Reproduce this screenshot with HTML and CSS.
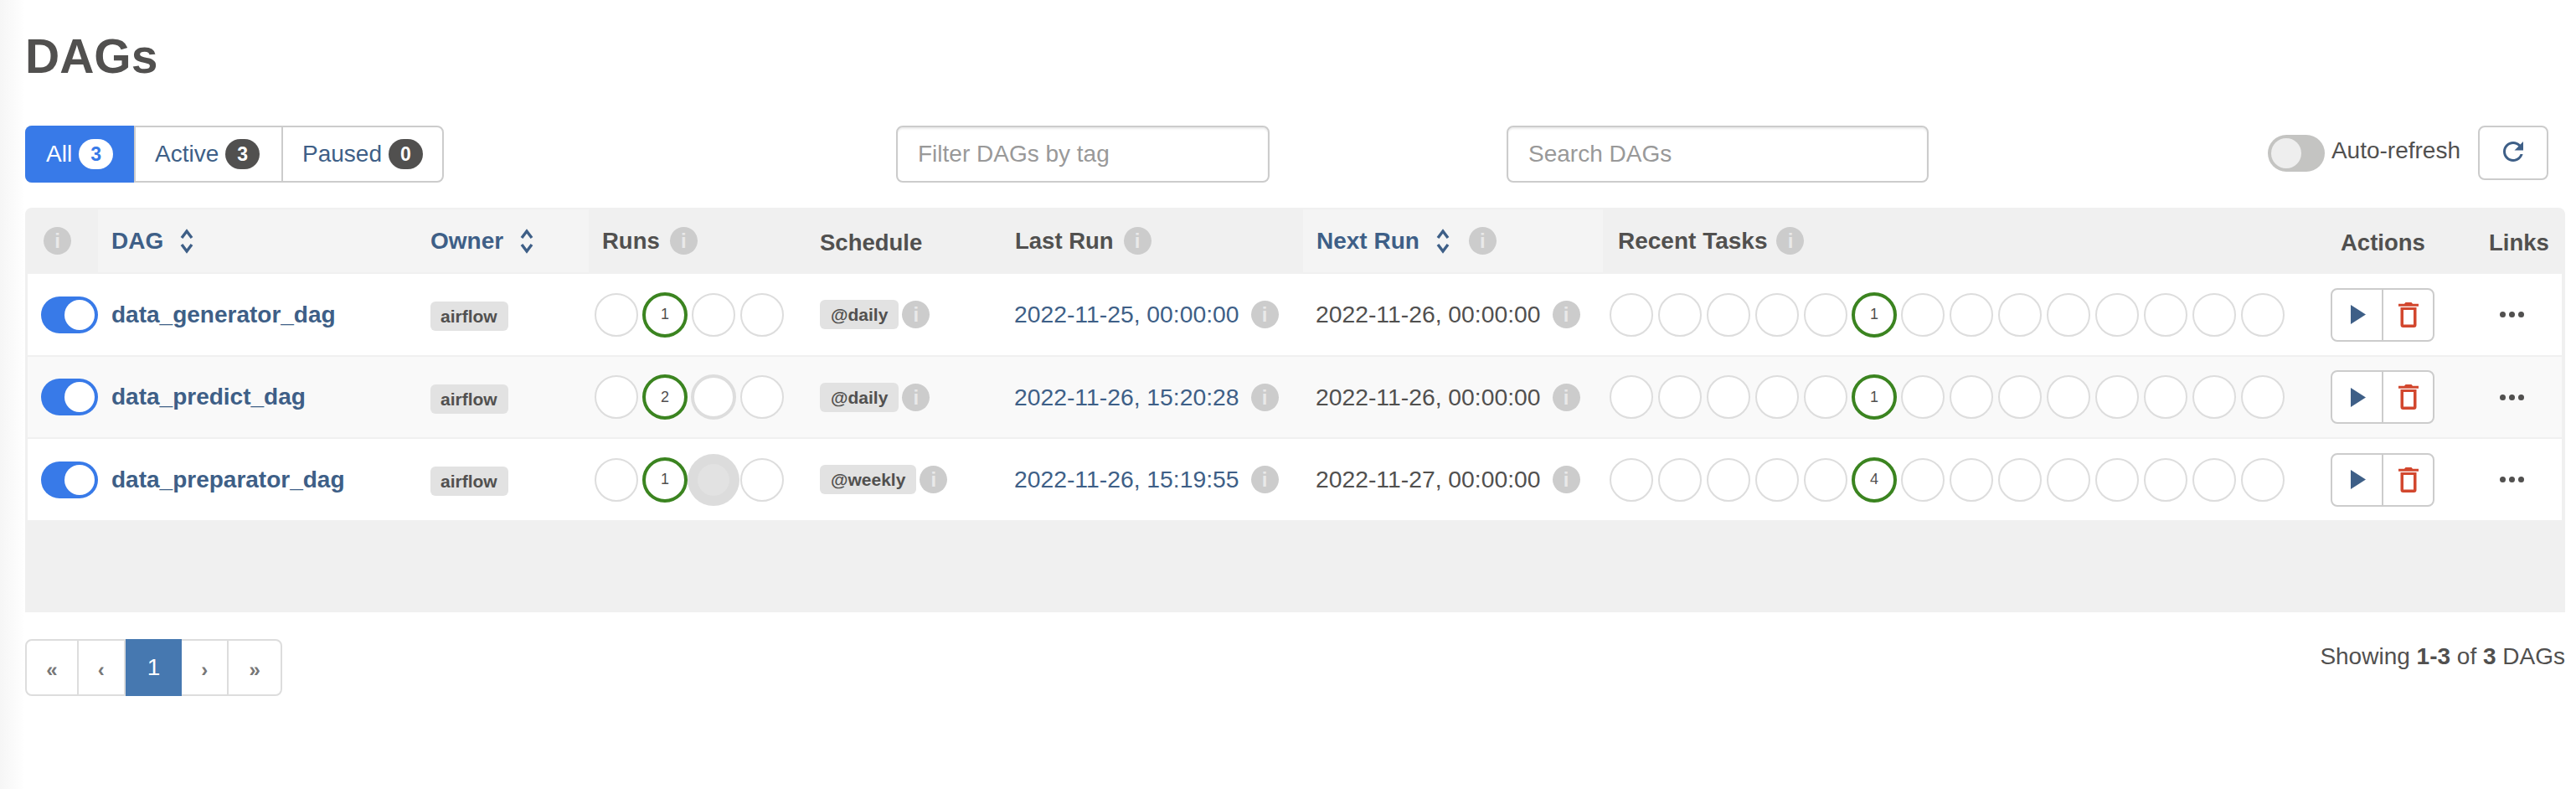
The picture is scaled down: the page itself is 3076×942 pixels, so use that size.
FILE: index.html
```html
<!DOCTYPE html>
<html lang="en">
<head>
<meta charset="utf-8">
<title>DAGs</title>
<link rel="stylesheet" href="styles.css">
</head>
<body>
<main class="page">
  <h1 class="title">DAGs</h1>
  <div class="toolbar">
    <div class="seg">
      <a class="seg-btn seg-on">All <span class="count count-on">3</span></a>
      <a class="seg-btn">Active <span class="count">3</span></a>
      <a class="seg-btn">Paused <span class="count">0</span></a>
    </div>
    <input class="field field-tag" placeholder="Filter DAGs by tag">
    <input class="field field-search" placeholder="Search DAGs">
    <div class="refresh">
      <span class="switch"></span>
      <span class="refresh-label">Auto-refresh</span>
      <button class="refresh-btn"><svg class="refresh-icon" viewBox="0 0 24 24"><path d="M17.65 6.35C16.2 4.9 14.21 4 12 4c-4.42 0-7.99 3.58-7.99 8s3.57 8 7.99 8c3.73 0 6.84-2.55 7.73-6h-2.08c-.82 2.33-3.04 4-5.65 4-3.31 0-6-2.69-6-6s2.69-6 6-6c1.66 0 3.14.69 4.22 1.78L13 11h7V4l-2.35 2.35z"/></svg></button>
    </div>
  </div>

  <div class="table-wrap">
    <table class="dags">
      <colgroup>
        <col class="c-toggle"><col class="c-dag"><col class="c-owner"><col class="c-runs"><col class="c-sched"><col class="c-last"><col class="c-next"><col class="c-tasks"><col class="c-actions"><col class="c-links">
      </colgroup>
      <thead>
        <tr>
          <th><span class="info info-first">i</span></th>
          <th class="sorted"><span class="head head-link">DAG <svg class="sort" viewBox="0 0 16 30"><path d="M2 11L8 3l6 8M2 19l6 8 6-8"/></svg></span></th>
          <th class="sorted"><span class="head head-link">Owner <svg class="sort" viewBox="0 0 16 30"><path d="M2 11L8 3l6 8M2 19l6 8 6-8"/></svg></span></th>
          <th><span class="head">Runs <span class="info">i</span></span></th>
          <th class="plain">Schedule</th>
          <th><span class="head">Last Run <span class="info">i</span></span></th>
          <th class="sorted"><span class="head head-link">Next Run <svg class="sort" viewBox="0 0 16 30"><path d="M2 11L8 3l6 8M2 19l6 8 6-8"/></svg> <span class="info info-far">i</span></span></th>
          <th class="sorted-off"><span class="head head-wide">Recent Tasks <span class="info">i</span></span></th>
          <th class="plain">Actions</th>
          <th class="plain">Links</th>
        </tr>
      </thead>
      <tbody id="rows">
        <tr class="row-a">
          <td><span class="toggle"></span></td>
          <td><a class="dag-name">data_generator_dag</a></td>
          <td><span class="tag tag-owner">airflow</span></td>
          <td class="dots-cell"><div class="dots"><i class="dot"></i><i class="dot dot-ok">1</i><i class="dot"></i><i class="dot"></i></div></td>
          <td><div class="sched"><span class="tag">@daily</span><span class="info">i</span></div></td>
          <td class="cell-last"><div class="when"><a class="date">2022-11-25, 00:00:00</a><span class="info">i</span></div></td>
          <td class="cell-next"><div class="when"><span class="date-plain">2022-11-26, 00:00:00</span><span class="info">i</span></div></td>
          <td class="dots-cell"><div class="dots"><i class="dot"></i><i class="dot"></i><i class="dot"></i><i class="dot"></i><i class="dot"></i><i class="dot dot-ok">1</i><i class="dot"></i><i class="dot"></i><i class="dot"></i><i class="dot"></i><i class="dot"></i><i class="dot"></i><i class="dot"></i><i class="dot"></i></div></td>
          <td class="act-cell"><div class="acts"><button class="act"><svg class="play" viewBox="0 0 18 23"><path d="M0 0l18 11.5L0 23z"/></svg></button><button class="act"><svg class="trash" viewBox="0 0 24 30"><path d="M8.5 0h7l1.5 1.7h7v3.1H0V1.700h7zM2.500 6h19v21a3 3 0 0 1-3 3h-13a3 3 0 0 1-3-3zM6 9v17.500h12V9z" fill-rule="evenodd"/></svg></button></div></td>
          <td class="more-cell"><span class="more"><i></i><i></i><i></i></span></td>
        </tr>
        <tr class="row-b">
          <td><span class="toggle"></span></td>
          <td><a class="dag-name">data_predict_dag</a></td>
          <td><span class="tag tag-owner">airflow</span></td>
          <td class="dots-cell"><div class="dots"><i class="dot"></i><i class="dot dot-ok">2</i><i class="dot dot-thick"></i><i class="dot"></i></div></td>
          <td><div class="sched"><span class="tag">@daily</span><span class="info">i</span></div></td>
          <td class="cell-last"><div class="when"><a class="date">2022-11-26, 15:20:28</a><span class="info">i</span></div></td>
          <td class="cell-next"><div class="when"><span class="date-plain">2022-11-26, 00:00:00</span><span class="info">i</span></div></td>
          <td class="dots-cell"><div class="dots"><i class="dot"></i><i class="dot"></i><i class="dot"></i><i class="dot"></i><i class="dot"></i><i class="dot dot-ok">1</i><i class="dot"></i><i class="dot"></i><i class="dot"></i><i class="dot"></i><i class="dot"></i><i class="dot"></i><i class="dot"></i><i class="dot"></i></div></td>
          <td class="act-cell"><div class="acts"><button class="act"><svg class="play" viewBox="0 0 18 23"><path d="M0 0l18 11.5L0 23z"/></svg></button><button class="act"><svg class="trash" viewBox="0 0 24 30"><path d="M8.5 0h7l1.5 1.7h7v3.1H0V1.700h7zM2.500 6h19v21a3 3 0 0 1-3 3h-13a3 3 0 0 1-3-3zM6 9v17.500h12V9z" fill-rule="evenodd"/></svg></button></div></td>
          <td class="more-cell"><span class="more"><i></i><i></i><i></i></span></td>
        </tr>
        <tr class="row-c">
          <td><span class="toggle"></span></td>
          <td><a class="dag-name">data_preparator_dag</a></td>
          <td><span class="tag tag-owner">airflow</span></td>
          <td class="dots-cell"><div class="dots"><i class="dot"></i><i class="dot dot-ok">1</i><i class="dot dot-pulse"></i><i class="dot"></i></div></td>
          <td><div class="sched"><span class="tag">@weekly</span><span class="info">i</span></div></td>
          <td class="cell-last"><div class="when"><a class="date">2022-11-26, 15:19:55</a><span class="info">i</span></div></td>
          <td class="cell-next"><div class="when"><span class="date-plain">2022-11-27, 00:00:00</span><span class="info">i</span></div></td>
          <td class="dots-cell"><div class="dots"><i class="dot"></i><i class="dot"></i><i class="dot"></i><i class="dot"></i><i class="dot"></i><i class="dot dot-ok">4</i><i class="dot"></i><i class="dot"></i><i class="dot"></i><i class="dot"></i><i class="dot"></i><i class="dot"></i><i class="dot"></i><i class="dot"></i></div></td>
          <td class="act-cell"><div class="acts"><button class="act"><svg class="play" viewBox="0 0 18 23"><path d="M0 0l18 11.5L0 23z"/></svg></button><button class="act"><svg class="trash" viewBox="0 0 24 30"><path d="M8.5 0h7l1.5 1.7h7v3.1H0V1.700h7zM2.500 6h19v21a3 3 0 0 1-3 3h-13a3 3 0 0 1-3-3zM6 9v17.500h12V9z" fill-rule="evenodd"/></svg></button></div></td>
          <td class="more-cell"><span class="more"><i></i><i></i><i></i></span></td>
        </tr>
      </tbody>
    </table>
  </div>

  <div class="foot">
    <nav class="pager">
      <a class="pg pg-1">«</a>
      <a class="pg pg-2">‹</a>
      <a class="pg pg-on">1</a>
      <a class="pg pg-2">›</a>
      <a class="pg pg-1">»</a>
    </nav>
    <p class="showing">Showing <b>1-3</b> of <b>3</b> DAGs</p>
  </div>
</main>
</body>
</html>
```

FILE: styles.css
```css
* { box-sizing: border-box; }
html, body { margin: 0; height: 100%; }
body {
  background: linear-gradient(to right, #f6f6f6 0, #fdfdfd 24px, #fff 30px);
  color: #51504f;
  font-family: "Liberation Sans", Arial, sans-serif;
  font-size: 28px;
}
.page { padding: 0 13px 0 30px; }
.title {
  margin: 0;
  height: 150px;
  padding-top: 35px;
  font-size: 57px;
  line-height: 64px;
  font-weight: 700;
  color: #51504f;
}

/* toolbar */
.toolbar { display: flex; align-items: flex-start; height: 68px; }
.seg {
  display: flex;
  width: 500px;
  height: 68px;
  border: 2px solid #ccc;
  border-radius: 8px;
  background: #fff;
}
.seg-btn {
  display: flex;
  align-items: center;
  gap: 8px;
  padding: 0 23px;
  color: #3e5f87;
  border-left: 2px solid #ccc;
  white-space: nowrap;
  flex: 0 0 auto;
}
.seg-btn:nth-child(2) { width: 176px; }
.seg-btn:nth-child(3) { width: 194px; }
.seg-on {
  margin: -2px 0 -2px -2px;
  width: 130px;
  background: #387ae8;
  color: #fff;
  border-left: 0;
  border-radius: 8px 0 0 8px;
  padding-left: 25px;
  padding-right: 0;
}
.count {
  display: inline-block;
  min-width: 41px;
  height: 36px;
  border-radius: 18px;
  background: #51504f;
  color: #fff;
  font-size: 23px;
  font-weight: 700;
  line-height: 36px;
  text-align: center;
}
.count-on { background: #fff; color: #387ae8; }
.field {
  height: 68px;
  padding: 0 24px;
  border: 2px solid #ccc;
  border-radius: 8px;
  box-shadow: inset 0 2px 2px rgba(0,0,0,.075);
  font: 28px "Liberation Sans", Arial, sans-serif;
  color: #51504f;
  background: #fff;
  outline: 0;
}
.field::placeholder { color: #999; opacity: 1; }
.field-tag { width: 446px; margin-left: 540px; }
.field-search { width: 504px; margin-left: 283px; }
.refresh { display: flex; align-items: flex-start; margin-left: auto; margin-right: 20px; }
.switch {
  width: 68px;
  height: 44px;
  margin-top: 11px;
  border-radius: 22px;
  background: #c4c4c2;
  position: relative;
}
.switch::after {
  content: "";
  position: absolute;
  left: 4px;
  top: 4px;
  width: 36px;
  height: 36px;
  border-radius: 50%;
  background: #eee;
}
.refresh-label { margin: 12px 21px 0 8px; line-height: 36px; }
.refresh-btn {
  display: flex;
  align-items: center;
  justify-content: center;
  width: 84px;
  height: 65px;
  padding: 0 0 3px;
  border: 2px solid #ccc;
  border-radius: 8px;
  background: #fff;
}
.refresh-icon { width: 36px; height: 36px; fill: #3e5f87; }

/* table */
.table-wrap {
  margin-top: 30px;
  height: 483px;
  width: 3033px;
  padding: 0 4px 0 3px;
  background: #f0f0f0;
  border-radius: 8px 8px 0 0;
}
.dags {
  width: 3026px;
  table-layout: fixed;
  border-collapse: separate;
  border-spacing: 0;
}
.c-toggle { width: 84px; }
.c-dag { width: 381px; }
.c-owner { width: 205px; }
.c-runs { width: 260px; }
.c-sched { width: 233px; }
.c-last { width: 360px; }
.c-next { width: 358px; }
.c-tasks { width: 865px; }
.c-actions { width: 177px; }
.c-links { width: 103px; }
th {
  height: 79px;
  padding: 0 0 0 16px;
  text-align: left;
  font-size: 27.5px;
  font-weight: 700;
  color: #51504f;
  white-space: nowrap;
  border-top: 2px solid transparent;
  border-bottom: 2px solid transparent;
  background-clip: padding-box;
}
th.sorted { background-color: #f4f4f4; }
th.plain { padding-top: 5px; }
th.sorted-off { padding-left: 18px; }
.head { display: flex; align-items: center; gap: 12px; }
.head-link { color: #3e5f87; gap: 0; font-size: 28px; }
.head-wide { font-size: 28px; gap: 11px; }
.sort { width: 16px; height: 30px; margin-left: 20px; fill: none; stroke: #3e5f87; stroke-width: 3.4; }
.info {
  display: inline-block;
  flex: none;
  width: 33px;
  height: 33px;
  border-radius: 50%;
  background: #ccc;
  color: #e9e9e9;
  font-size: 24px;
  font-weight: 700;
  line-height: 33px;
  text-align: center;
}
.info-first { margin-left: 3px; }
.info-far { margin-left: 23px; }

td {
  height: 99px;
  padding: 0 0 0 16px;
  background: #fff;
  border-bottom: 2px solid #f0f0f0;
  vertical-align: middle;
  white-space: nowrap;
}
.row-b td { background: #f9f9f9; height: 98px; }
.row-c td { height: 97px; border-bottom: 0; }
.toggle {
  display: block;
  position: relative;
  width: 68px;
  height: 44px;
  border-radius: 22px;
  background: #387ae8;
}
.toggle::after {
  content: "";
  position: absolute;
  right: 4px;
  top: 4px;
  width: 36px;
  height: 36px;
  border-radius: 50%;
  background: #fff;
}
.dag-name { font-weight: 700; color: #3e5f87; }
.tag {
  display: inline-block;
  height: 35px;
  padding: 0 13px;
  border-radius: 6px;
  background: #e2e2e2;
  color: #51504f;
  font-size: 21px;
  font-weight: 700;
  line-height: 35px;
}
.tag-owner { display: block; width: 93px; padding: 0 12px; margin-top: 4px; }
.dots-cell { padding-left: 7px; }
td.dots-cell:nth-child(8) { padding-left: 8px; }
.dots { display: flex; align-items: center; gap: 6px; }
.dot {
  flex: none;
  display: flex;
  align-items: center;
  justify-content: center;
  width: 52px;
  height: 52px;
  border: 2px solid #ddd;
  border-radius: 50%;
  background: #fff;
  color: #51504f;
  font-size: 18px;
  font-style: normal;
}
.dot-ok { width: 54px; height: 54px; margin: 0 -1px; border: 4px solid #3b8420; }
.dot-thick { width: 54px; height: 54px; margin: 0 -1px; border: 4px solid #ddd; }
.dot-pulse { width: 38px; height: 38px; margin: 0 7px; border: 0; background: #e2e2e2; box-shadow: 0 0 0 12px #dcdcdc; }
.sched { display: flex; align-items: center; gap: 4px; }
.when { display: flex; align-items: center; gap: 14px; font-size: 28.3px; }
.date { color: #3e5f87; }
.date-plain { color: #51504f; }
.cell-last { padding-left: 15px; }
.cell-next { padding-left: 15px; }
.act-cell { padding-left: 4px; }
.acts {
  display: flex;
  width: 124px;
  height: 64px;
  border: 2px solid #ccc;
  border-radius: 8px;
  background: #fff;
}
.act {
  flex: 1;
  display: flex;
  align-items: center;
  justify-content: center;
  padding: 0;
  border: 0;
  background: transparent;
}
.act + .act { border-left: 2px solid #ccc; }
.play { width: 18px; height: 23px; fill: #3e5f87; margin-left: 2px; }
.trash { width: 24px; height: 30px; fill: #d2472e; }
.more-cell { padding-left: 29px; }
.more { display: flex; gap: 4px; }
.more i { width: 7px; height: 7px; border-radius: 50%; background: #51504f; }

/* footer */
.foot { display: flex; justify-content: space-between; align-items: flex-start; margin-top: 32px; }
.pager {
  display: flex;
  width: 307px;
  height: 68px;
  border: 2px solid #ddd;
  border-radius: 8px;
  background: #fff;
}
.pg {
  display: flex;
  align-items: center;
  justify-content: center;
  padding-top: 6px;
  color: #777;
  font-size: 24px;
  font-weight: 700;
  border-right: 2px solid #ddd;
}
.pg-1 { width: 62px; }
.pg-2 { width: 56px; }
.pg:last-child { border-right: 0; width: 62px; }
.pg-on {
  width: 68px;
  margin: -2px 0;
  padding: 0;
  background: #4678b0;
  color: #fff;
  font-size: 28px;
  font-weight: 400;
  border-right: 0;
}
.showing { margin: 3px 0 0; line-height: 36px; }
.showing b { font-weight: 700; }
```
